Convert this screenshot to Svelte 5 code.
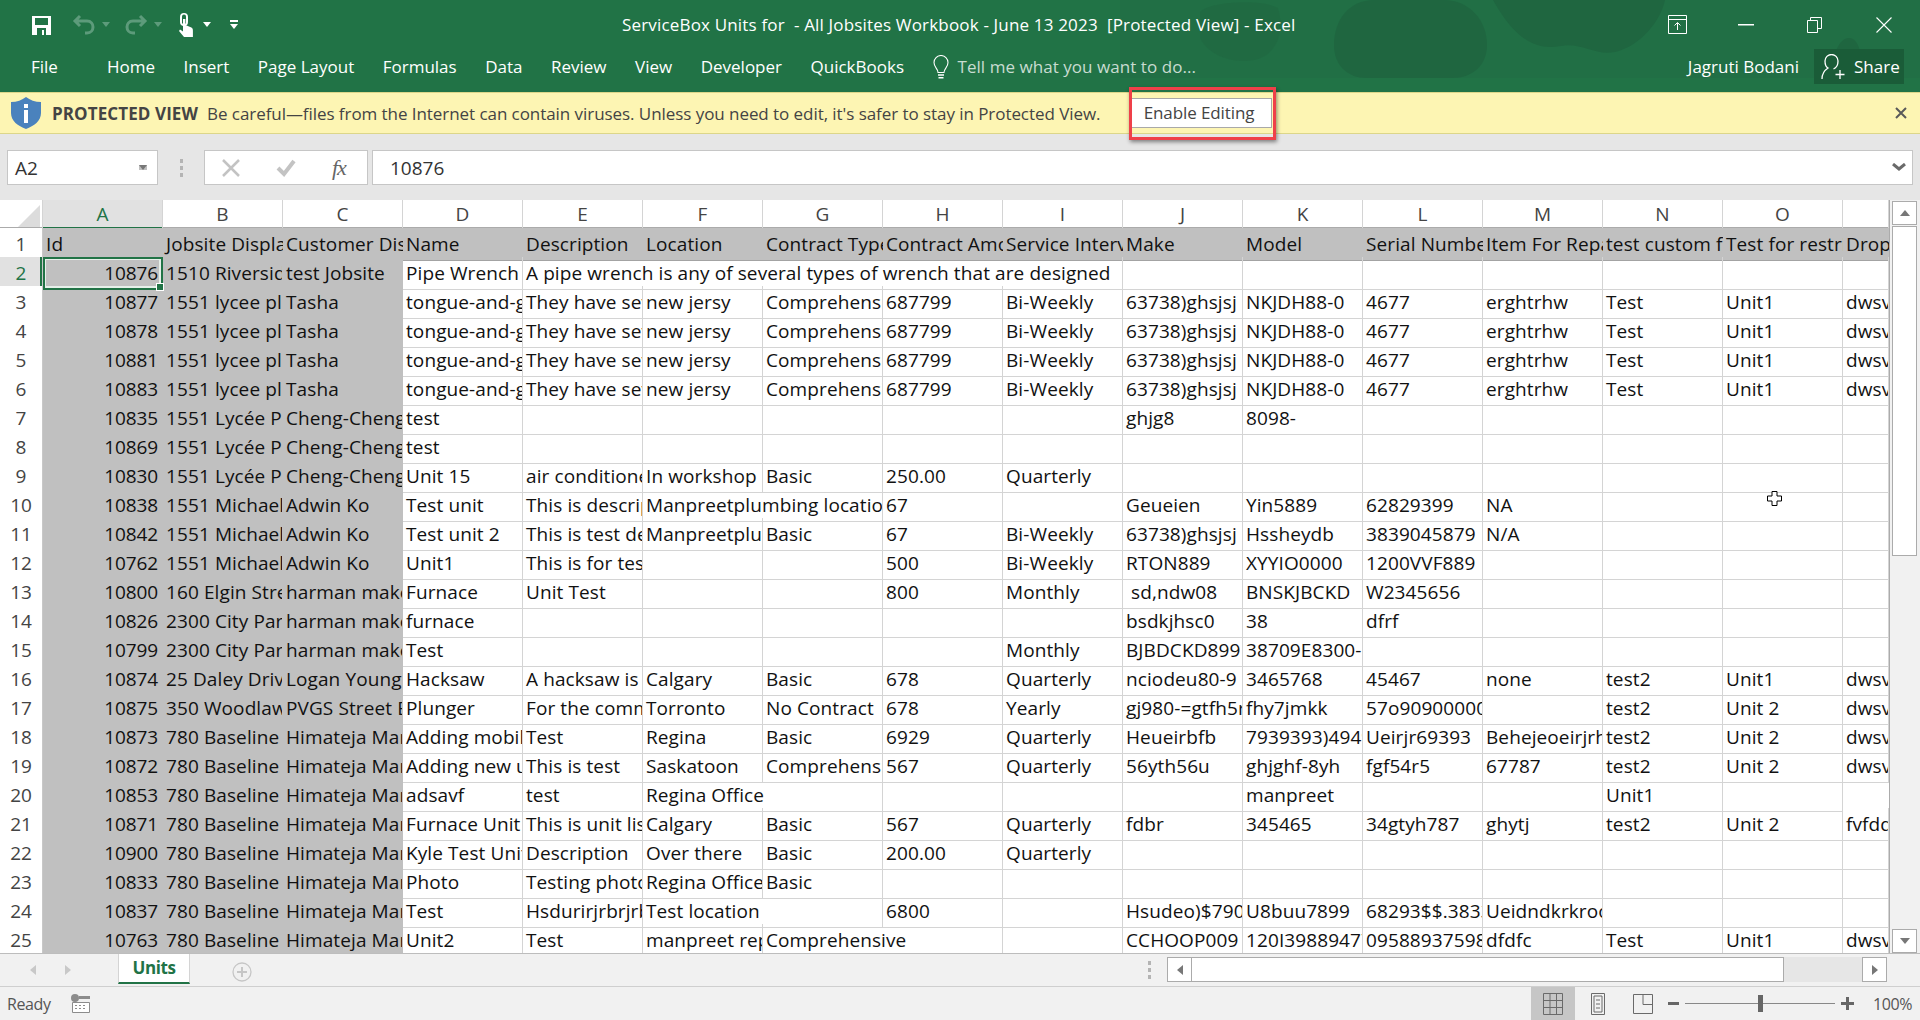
<script>
  const tabs = ['Home','Insert','Page Layout','Formulas','Data','Review','View','Developer','QuickBooks'];
  const cols = ['A','B','C','D','E','F','G','H','I','J','K','L','M','N','O',''];
  const L1 = '1551 lycee place', L2 = '1551 Lycée Place', M = '1551 Michael Dr', B7 = '780 Baseline Rd', H = 'Himateja Manchala', CC = 'Cheng-Cheng Lee', AK = 'Adwin Ko', HM = 'harman maker', CP = '2300 City Park';
  const t = '63738)ghsjsj|NKJDH88-0|4677|erghtrhw|Test|Unit1|dwsvd';
  const raw = [
    `10876|1510 Riverside Dr|test Jobsite|Pipe Wrench|A pipe wrench is any of several types of wrench that are designed|>|>|>|>||||||||`,
    `10877|${L1}|Tasha|tongue-and-groove|They have several|new jersy|Comprehensive|687799|Bi-Weekly|${t}`,
    `10878|${L1}|Tasha|tongue-and-groove|They have several|new jersy|Comprehensive|687799|Bi-Weekly|${t}`,
    `10881|${L1}|Tasha|tongue-and-groove|They have several|new jersy|Comprehensive|687799|Bi-Weekly|${t}`,
    `10883|${L1}|Tasha|tongue-and-groove|They have several|new jersy|Comprehensive|687799|Bi-Weekly|${t}`,
    `10835|${L2}|${CC}|test||||||ghjg8|8098-|||||`,
    `10869|${L2}|${CC}|test||||||||||||`,
    `10830|${L2}|${CC}|Unit 15|air conditioner|In workshop|Basic|250.00|Quarterly|||||||`,
    `10838|${M}|${AK}|Test unit|This is description|Manpreetplumbing location|>|67||Geueien|Yin5889|62829399|NA|||`,
    `10842|${M}|${AK}|Test unit 2|This is test desc|Manpreetplumbing|Basic|67|Bi-Weekly|63738)ghsjsj|Hssheydb|3839045879|N/A|||`,
    `10762|${M}|${AK}|Unit1|This is for testing|||500|Bi-Weekly|RTON889|XYYIO0000|1200VVF889||||`,
    `10800|160 Elgin Street|${HM}|Furnace|Unit Test|||800|Monthly| sd,ndw08|BNSKJBCKD|W2345656||||`,
    `10826|${CP}|${HM}|furnace||||||bsdkjhsc0|38|dfrf||||`,
    `10799|${CP}|${HM}|Test|||||Monthly|BJBDCKD899|38709E8300-|||||`,
    `10874|25 Daley Drive|Logan Young|Hacksaw|A hacksaw is a|Calgary|Basic|678|Quarterly|nciodeu80-9|3465768|45467|none|test2|Unit1|dwsvd`,
    `10875|350 Woodlawn|PVGS Street East|Plunger|For the common|Torronto|No Contract|678|Yearly|gj980-=gtfh5r|fhy7jmkk|57o9090000000||test2|Unit 2|dwsvd`,
    `10873|${B7}|${H}|Adding mobile|Test|Regina|Basic|6929|Quarterly|Heueirbfb|7939393)4949|Ueirjr69393|Behejeoeirjrhh|test2|Unit 2|dwsvd`,
    `10872|${B7}|${H}|Adding new unit|This is test|Saskatoon|Comprehensive|567|Quarterly|56yth56u|ghjghf-8yh|fgf54r5|67787|test2|Unit 2|dwsvd`,
    `10853|${B7}|${H}|adsavf|test|Regina Office|>||||manpreet|||Unit1|`,
    `10871|${B7}|${H}|Furnace Unit|This is unit list|Calgary|Basic|567|Quarterly|fdbr|345465|34gtyh787|ghytj|test2|Unit 2|fvfdd`,
    `10900|${B7}|${H}|Kyle Test Unit|Description|Over there|Basic|200.00|Quarterly|||||||`,
    `10833|${B7}|${H}|Photo|Testing photo|Regina Office|Basic||||||||||`,
    `10837|${B7}|${H}|Test|Hsdurirjrbrjrbr|Test location|>|6800||Hsudeo)$7900|U8buu7899|68293$$.3833|Ueidndkrkrooo|||`,
    `10763|${B7}|${H}|Unit2|Test|manpreet repair|Comprehensive|>||CCHOOP009|120I39889477|09588937598|dfdfc|Test|Unit1|dwsvd`
  ];
  const head = ['Id','Jobsite Display','Customer Display','Name','Description','Location','Contract Type','Contract Amount','Service Interval','Make','Model','Serial Number','Item For Repair','test custom field','Test for restricted','Drop'];
  const rows = raw.map((line) => {
    const parts = line.split('|');
    const out = [];
    parts.forEach((p, i) => {
      if (p === '>') out[out.length - 1].span++;
      else out.push({ text: p, span: 1, idx: i });
    });
    return out;
  });
</script>

<div class="app">
  <header class="title">
    <svg class="pattern" width="1920" height="78" viewBox="0 0 1920 78" aria-hidden="true">
      <path fill="#226e45" d="M1120 0h800v78h-800z" opacity=".7"/>
      <g fill="#1f6640">
        <path d="M1334 45c0-25 15-45 40-45h70c25 0 43 20 43 45 0 20-14 33-35 33h-85c-20 0-33-13-33-33z"/>
        <path d="M1493 0h172c-4 20-24 46-50 52-20 4-34-10-54-6-30 6-50-14-68-46z"/>
        <path d="M1200 12c8-10 60-14 78-4 6 20 2 46-24 52-24 4-46-6-54-22z" opacity=".5"/>
        <path d="M1833 78c-2-22 6-40 16-40 10 0 14 18 13 40z"/>
      </g>
    </svg>
    <div class="qat">
      <div class="qat-icons">
        <svg class="ic-save" width="20" height="20" viewBox="0 0 20 20"><path fill="#fff" d="M0 1h19v19H0z"/><path fill="#217346" d="M3 3h13v7H3z"/><path fill="#217346" d="M5 13h9v7H5z"/><path fill="#fff" d="M10 15h2v5h-2z"/></svg>
        <svg class="ic-undo" width="24" height="22" viewBox="0 0 24 22"><path fill="none" stroke="#5d9b7b" stroke-width="3" d="M8 2 3 7l5 5M3 7h12c4 0 6 3 6 6s-2 6-6 6h-2"/></svg>
        <span class="caret dim"></span>
        <svg class="ic-redo" width="24" height="22" viewBox="0 0 24 22"><path fill="none" stroke="#5d9b7b" stroke-width="3" d="m16 2 5 5-5 5M21 7H9c-4 0-6 3-6 6s2 6 6 6h2"/></svg>
        <span class="caret dim"></span>
        <svg class="ic-touch" width="18" height="24" viewBox="0 0 18 24"><path fill="#fff" d="M4 4a4 4 0 0 1 8 0v5a4 4 0 0 1-8 0zM6 3.500v7h4v-7a2 2 0 0 0-4 0z"/><path fill="#fff" d="M7 6h2.400v6l6 2.500c1.500.8 1.500 2 1.500 3.500v6H8l-5-6 1-1.500 3 2z"/></svg>
        <span class="caret"></span>
        <span class="qat-more"><i></i><span class="caret small"></span></span>
      </div>
      <div class="doc-title">ServiceBox Units for&nbsp; - All Jobsites Workbook - June 13 2023&nbsp; [Protected View] - Excel</div>
      <div class="win">
        <svg width="19" height="19" viewBox="0 0 19 19"><path fill="none" stroke="#fff" d="M.5 .5h18v18H.500zM.5 4.500h18M9.500 15V8M6.500 10.500l3-3 3 3"/></svg>
        <svg class="w-min" width="16" height="2" viewBox="0 0 16 2"><path fill="#fff" d="M0 0h16v1.500H0z"/></svg>
        <svg class="w-max" width="15" height="16" viewBox="0 0 15 16"><path fill="none" stroke="#fff" d="M.5 3.500h10v12H.500zM3.500 3.500V.5h11v11h-4"/></svg>
        <svg class="w-x" width="16" height="16" viewBox="0 0 16 16"><path fill="none" stroke="#fff" stroke-width="1.100" d="m.5 .5 15 15M15.500 .5l-15 15"/></svg>
      </div>
    </div>
    <nav class="ribbon">
      <span class="file">File</span>
      {#each tabs as tab}<span class="tab">{tab}</span>{/each}
      <svg class="bulb" width="16" height="24" viewBox="0 0 16 24"><path fill="none" stroke="#fff" stroke-width="1.100" d="M5 17.500c0-4-4-5-4-10a7 7 0 0 1 14 0c0 5-4 6-4 10z"/><path stroke="#fff" stroke-width="1.400" d="M5 20h6M5.500 22.800h5"/></svg>
      <span class="tell">Tell me what you want to do...</span>
      <span class="user">Jagruti Bodani</span>
      <span class="share">
        <svg width="25" height="26" viewBox="0 0 25 26"><path fill="none" stroke="#fff" stroke-width="1.300" d="M1 25c0-6 3-9 6-11-2-1-3-4-3-7a6.500 6.500 0 0 1 13 0c0 4-2 7-4.500 8"/><path stroke="#fff" stroke-width="1.300" d="M19 16v9M14.500 20.500h9"/></svg>
        Share
      </span>
    </nav>
  </header>

  <section class="notice">
    <svg class="shield" width="30" height="32" viewBox="0 0 30 32"><path fill="#4a82bd" d="M15 0c4 3 9 5 15 5v11c0 8-7 13-15 16C7 29 0 24 0 16V5c6 0 11-2 15-5z"/><path fill="#fff" d="M13 7h4v4h-4zM13 13h4v13h-4z"/></svg>
    <strong>PROTECTED VIEW</strong>
    <span class="msg">Be careful—files from the Internet can contain viruses. Unless you need to edit, it's safer to stay in Protected View.</span>
    <span class="enable">Enable Editing</span>
    <svg class="nclose" width="12" height="12" viewBox="0 0 12 12"><path stroke="#595959" stroke-width="2" d="m1 1 10 10M11 1 1 11"/></svg>
  </section>

  <section class="fbar">
    <div class="namebox"><span>A2</span><i class="caret grey"></i></div>
    <div class="fdots"><i></i><i></i><i></i></div>
    <div class="fbtns">
      <svg width="18" height="18" viewBox="0 0 18 18"><path stroke="#c3c3c3" stroke-width="2.500" d="m1 1 16 16M17 1 1 17"/></svg>
      <svg width="20" height="18" viewBox="0 0 20 18"><path fill="none" stroke="#c3c3c3" stroke-width="4" d="m2 9 6 6L18 2"/></svg>
      <span class="fx">fx</span>
    </div>
    <div class="finput"><span>10876</span><svg width="14" height="9" viewBox="0 0 14 9"><path fill="none" stroke="#6a6a6a" stroke-width="3" d="m1 1 6 5 6-5"/></svg></div>
  </section>

  <section class="sheet">
    <div class="gridwrap">
      <div class="row colhead">
        <div class="corner"><svg width="22" height="22" viewBox="0 0 22 22"><path fill="#dcdcdc" d="M22 0v22H0z"/></svg></div>
        {#each cols as c, i}<div class="ch" class:on={i === 0}>{c}</div>{/each}
      </div>
      <div class="row hdr">
        <div class="rh">1</div>
        {#each head as h}<div class="cell">{h}</div>{/each}
      </div>
      {#each rows as r, n}
        <div class="row">
          <div class="rh" class:on={n === 0}>{n + 2}</div>
          {#each r as c, j}
            <div class="cell" class:grey={c.idx < 3} class:num={c.idx === 0} class:sel={n === 0 && c.idx === 0} style:grid-column={c.span > 1 ? `span ${c.span}` : null}>{c.text}</div>
          {/each}
        </div>
      {/each}
      <svg class="cursor" width="15" height="15" viewBox="0 0 15 15"><path fill="#fff" stroke="#000" d="M5 .5h5v4.500h4.500v5H10v4.500H5V10H.5V5H5z"/></svg>
    </div>
    <div class="vscroll">
      <div class="sbtn"><i class="tri up"></i></div>
      <div class="vthumb"></div>
      <div class="sbtn"><i class="tri down"></i></div>
    </div>
  </section>

  <section class="tabsbar">
    <div class="navs"><i class="tri left light"></i><i class="tri right light"></i></div>
    <div class="sheet-tab">Units</div>
    <div class="plus"><svg width="20" height="20" viewBox="0 0 20 20"><circle cx="10" cy="10" r="9" fill="none" stroke="#c6c6c6" stroke-width="1.300"/><path stroke="#c6c6c6" stroke-width="2" d="M10 5v10M5 10h10"/></svg></div>
    <div class="hs-dots"><i></i><i></i><i></i></div>
    <div class="hscroll">
      <div class="hbtn"><i class="tri left"></i></div>
      <div class="hthumb"></div>
      <div class="htrack"></div>
      <div class="hbtn"><i class="tri right"></i></div>
    </div>
  </section>

  <footer class="status">
    <span class="ready">Ready</span>
    <svg class="macro" width="20" height="19" viewBox="0 0 20 19"><circle cx="5" cy="4" r="4" fill="#8c8c8c"/><path fill="#fff" stroke="#8c8c8c" d="M2.500 8.500h17v10h-17z"/><path fill="#8c8c8c" d="M9 2h11v3H9zM5 11h2v1H5zm4 0h2v1H9zm4 0h2v1h-2zM5 14h2v1H5zm4 0h2v1H9zm4 0h2v1h-2z"/></svg>
    <div class="views">
      <span class="view active"><svg width="20" height="22" viewBox="0 0 20 22"><path fill="none" stroke="#6a6a6a" d="M.5 .5h19v21H.500zM7 .5v21M13.500 .5v21M.5 7.500h19M.5 14.500h19"/></svg></span>
      <span class="view"><svg width="14" height="22" viewBox="0 0 14 22"><path fill="none" stroke="#6a6a6a" d="M.5 .5h13v21H.500zM3 3h8v16H3zM5 7h4M5 11h4M5 15h4"/></svg></span>
      <span class="view"><svg width="20" height="20" viewBox="0 0 20 20"><path fill="none" stroke="#6a6a6a" d="M.5 .5h19v19H.500zM10 .5v10M10 10.500h9.500"/></svg></span>
    </div>
    <div class="zoom">
      <i class="zm"></i>
      <div class="slider"><b></b></div>
      <i class="zp"></i>
    </div>
    <span class="pct">100%</span>
  </footer>
</div>

<style>
  :global(body) { margin: 0; overflow: hidden; background: #f1f1f1; }
  .app { width: 1920px; height: 1020px; display: flex; flex-direction: column; overflow: hidden; font-family: "Open Sans", "Noto Sans", sans-serif; color: #444; }

  .title { position: relative; height: 92px; flex: none; background: #217346; color: #fff; }
  .pattern { position: absolute; left: 0; top: 0; pointer-events: none; }
  .qat { position: relative; height: 49px; display: flex; align-items: center; }
  .qat-icons { display: flex; align-items: center; width: 622px; padding-left: 32px; box-sizing: border-box; }
  .ic-save { margin-right: 20px; }
  .ic-undo { margin-right: 6px; }
  .ic-redo { margin-left: 14px; margin-right: 6px; }
  .ic-touch { margin-left: 14px; margin-right: 9px; }
  .caret { display: inline-block; width: 0; height: 0; border: 4px solid transparent; border-top: 5px solid #fff; border-bottom: 0; }
  .caret.dim { border-top-color: #5d9b7b; }
  .qat-more { margin-left: 19px; display: flex; flex-direction: column; align-items: center; gap: 2px; }
  .qat-more i { width: 8px; height: 2px; background: #fff; }
  .doc-title { width: 680px; font-size: 17px; letter-spacing: .17px; white-space: pre; }
  .win { position: absolute; left: 1668px; top: 15px; display: flex; align-items: center; }
  .w-min { margin-left: 51px; }
  .w-max { margin-left: 53px; }
  .w-x { margin-left: 54px; }

  .ribbon { position: relative; height: 43px; display: flex; align-items: flex-start; font-size: 17px; }
  .ribbon > span { line-height: 36px; }
  .file { margin-left: 31px; margin-right: 49px; }
  .tab { margin-right: 28.500px; }
  .bulb { margin-top: 6px; margin-left: 0; margin-right: 9px; }
  .tell { color: #c8dcd1; letter-spacing: .05px; }
  .user { margin-left: auto; margin-right: 15px; }
  .share { width: 90px; height: 35px; box-sizing: border-box; margin-right: 16px; background: #1a5c38; display: flex; align-items: center; gap: 8px; padding-left: 7px; }

  .notice { position: relative; height: 42px; flex: none; box-sizing: border-box; background: #fdf5b3; border-top: 1px solid #dcd68a; border-bottom: 1px solid #dcd68a; display: flex; align-items: center; padding-left: 11px; font-size: 17px; color: #444; }
  .shield { margin-right: 11px; }
  .notice strong { font-weight: 700; margin-right: 9px; letter-spacing: .1px; }
  .msg { white-space: nowrap; letter-spacing: -.06px; }
  .enable { position: absolute; left: 1130px; top: 5px; width: 142px; height: 30px; box-sizing: border-box; background: #fff; border: 1px solid #a9a9a9; text-align: center; line-height: 28px; padding-right: 4px; letter-spacing: -.1px; }
  .enable::after { content: ""; position: absolute; left: -2px; top: -12px; width: 141px; height: 47px; border: 3px solid #ef4049; box-shadow: 1px 2px 4px rgba(0,0,0,.45); }
  .nclose { position: absolute; left: 1895px; top: 14px; }

  .fbar { height: 66px; flex: none; background: #e6e6e6; display: flex; align-items: flex-start; padding-top: 16px; box-sizing: border-box; padding-left: 7px; }
  .namebox, .fbtns, .finput { height: 35px; box-sizing: border-box; background: #fff; border: 1px solid #c6c6c6; display: flex; align-items: center; }
  .namebox { width: 151px; padding-left: 7px; font-size: 19px; justify-content: space-between; padding-right: 10px; color: #333; }
  .caret.grey { border-top-color: #777; }
  .fdots { width: 46px; height: 35px; display: flex; flex-direction: column; align-items: center; justify-content: center; gap: 3px; }
  .fdots i, .hs-dots i { width: 3px; height: 4px; background: #b4b4b4; display: block; }
  .fbtns { width: 164px; padding-left: 17px; gap: 0; }
  .fbtns svg:nth-child(2) { margin-left: 36px; }
  .fx { font-family: "Liberation Serif", serif; font-style: italic; font-size: 22px; margin-left: 36px; color: #666; letter-spacing: -1px; }
  .finput { width: 1541px; margin-left: 4px; padding-left: 17px; padding-right: 6px; justify-content: space-between; font-size: 19px; color: #333; }

  .sheet { position: relative; height: 753px; flex: none; display: flex; background: #fff; }
  .gridwrap { position: relative; width: 1889px; overflow: hidden; border-right: 1px solid #ababab; box-sizing: content-box; flex: none; }
  .row { display: grid; grid-template-columns: 43px repeat(15, 120px) 46px; height: 29px; box-sizing: border-box; font-size: 19px; letter-spacing: .1px; color: #111; }
  .colhead { height: 28px; border-bottom: 1px solid #ababab; }
  .corner { display: flex; align-items: flex-end; justify-content: flex-end; padding: 0 2px 2px 0; overflow: hidden; border-right: 1px solid #d4d4d4; }
  .ch { text-align: center; line-height: 29px; border-right: 1px solid #d4d4d4; color: #444; }
  .ch.on { background: #e1e1e1; color: #217346; box-shadow: inset 0 -2px #217346; }
  .rh { text-align: center; line-height: 32px; border-right: 1px solid #c8c8c8; border-bottom: 1px solid #d4d4d4; color: #444; background: #fff; letter-spacing: 0; }
  .rh.on { background: #e1e1e1; color: #217346; box-shadow: inset -2px 0 #217346; }
  .cell { min-width: 0; overflow: hidden; white-space: pre; padding: 0 0 0 3px; line-height: 32px; border-right: 1px solid #d4d4d4; border-bottom: 1px solid #d4d4d4; }
  .hdr { background: #c0c0c0; }
  .hdr .cell { background: #c0c0c0; border-right: 0; border-bottom: 1px solid #a3a3a3; }
  .hdr .rh { background: #fff; }
  .grey { background: #c0c0c0; border-color: #c0c0c0; }
  .num { text-align: right; padding: 0 4px 0 0; letter-spacing: -.1px; }
  .sel { position: relative; overflow: visible; outline: 2px solid #217346; outline-offset: -2px; box-shadow: inset 0 0 0 3px #e6f0ea; }
  .sel::after { content: ""; position: absolute; right: -2px; bottom: -2px; width: 6px; height: 6px; background: #217346; border: 1px solid #fff; }
  .cursor { position: absolute; left: 1767px; top: 291px; }

  .vscroll { width: 30px; flex: none; background: #f1f1f1; display: flex; flex-direction: column; padding: 1px 3px 0 2px; box-sizing: border-box; }
  .sbtn { height: 24px; flex: none; box-sizing: border-box; background: #fff; border: 1px solid #ababab; display: flex; align-items: center; justify-content: center; }
  .vthumb { height: 330px; margin-top: 1px; margin-bottom: auto; background: #fff; border: 1px solid #ababab; box-sizing: border-box; flex: none; }
  .tri { display: block; width: 0; height: 0; border: 5px solid transparent; }
  .tri.up { border-top: 0; border-bottom: 6px solid #777; }
  .tri.down { border-bottom: 0; border-top: 6px solid #777; }
  .tri.left { border-left: 0; border-right: 6px solid #777; }
  .tri.right { border-right: 0; border-left: 6px solid #777; }
  .tri.light.left { border-right-color: #c8c8c8; }
  .tri.light.right { border-left-color: #c8c8c8; }

  .tabsbar { height: 34px; flex: none; background: #f1f1f1; display: flex; align-items: flex-start; box-sizing: border-box; border-bottom: 1px solid #cfcfcf; border-top: 1px solid #bdbdbd; }
  .navs { width: 118px; height: 32px; box-sizing: border-box; padding: 0 0 0 30px; display: flex; align-items: center; gap: 29px; }
  .sheet-tab { width: 72px; height: 30px; box-sizing: border-box; background: #fff; border-bottom: 2px solid #217346; border-left: 1px solid #d4d4d4; border-right: 1px solid #d4d4d4; color: #217346; font-weight: 700; font-size: 17px; text-align: center; line-height: 28px; letter-spacing: -.4px; }
  .plus { margin-left: 42px; margin-top: 8px; height: 20px; }
  .hs-dots { margin-left: 879px; width: 36px; height: 32px; display: flex; flex-direction: column; align-items: center; justify-content: center; gap: 3px; }
  .hscroll { margin-top: 3px; display: flex; height: 25px; }
  .hbtn { width: 25px; height: 25px; box-sizing: border-box; background: #fff; border: 1px solid #ababab; display: flex; align-items: center; justify-content: center; }
  .hthumb { width: 592px; background: #fff; border: 1px solid #ababab; border-left: 0; box-sizing: border-box; }
  .htrack { width: 78px; background: #e6e6e6; }

  .status { position: relative; flex: 1; background: #f1f1f1; display: flex; align-items: center; font-size: 16px; color: #555; letter-spacing: -0.4px; }
  .ready { margin-left: 7px; }
  .macro { margin-left: 19px; }
  .views { margin-left: auto; display: flex; align-self: stretch; }
  .view { width: 44px; display: flex; align-items: center; justify-content: center; margin-right: 1px; }
  .view.active { background: #c6c6c6; }
  .zoom { display: flex; align-items: center; margin-left: 2px; margin-right: 19px; gap: 3px; }
  .zm { width: 11px; height: 3px; background: #666; display: block; }
  .zp { width: 13px; height: 13px; display: block; background: linear-gradient(#666,#666) center/13px 3px no-repeat, linear-gradient(#666,#666) center/3px 13px no-repeat; }
  .slider { position: relative; width: 150px; height: 1px; background: #888; margin: 0 3px; }
  .slider b { position: absolute; left: 73px; top: -8px; width: 5px; height: 17px; background: #666; display: block; }
  .pct { margin-right: 8px; width: 39px; }
</style>
